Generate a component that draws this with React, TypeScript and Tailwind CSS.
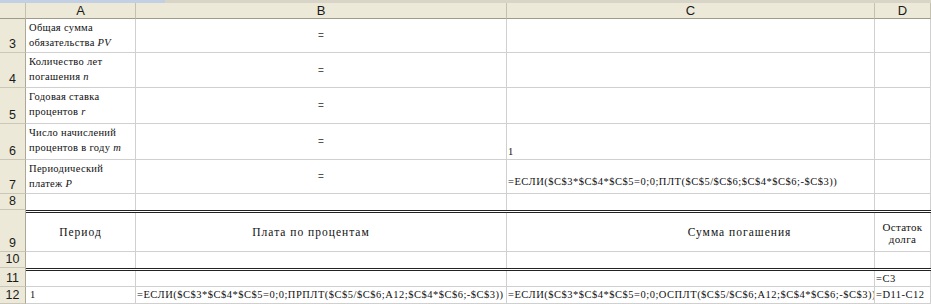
import React from "react";

const COLS = "grid grid-cols-[26px_110px_371px_368px_56px]";
const serif = "[font-family:'Liberation_Serif','Times_New_Roman',serif]";
const sans = "[font-family:'Liberation_Sans',Arial,sans-serif]";

function RowHead({ n }: { n: number }) {
  return (
    <div
      className={`${sans} flex items-end justify-center bg-[#ECE9D8] border-r border-b border-r-[#ACA899] border-b-[#CBC7B8] text-[12.5px] leading-[12px] pb-[2px] text-[#1a1a1a]`}
    >
      {n}
    </div>
  );
}

function Cell({ className = "", children }: { className?: string; children?: React.ReactNode }) {
  return <div className={`border-r border-b border-[#D0D0D0] bg-white overflow-hidden ${className}`}>{children}</div>;
}

const labelCls = `${serif} text-[10.5px] leading-[15px] tracking-[0.3px] text-[#111] pl-[3px] pt-[1px]`;
const eqCls = `${sans} flex items-center justify-center text-[10px] text-[#555]`;
const formulaCls = `${serif} text-[10.5px] leading-[14px] tracking-[0.5px] text-[#111] whitespace-nowrap pl-[1px]`;
const headCls = `${serif} flex items-center justify-center text-[11.5px] tracking-[1px] text-[#111] pt-[2px]`;

const inputs: { n: number; h: string; label: React.ReactNode; c?: React.ReactNode; cAlign?: string }[] = [
  { n: 3, h: "h-[34px]", label: <>Общая сумма<br />обязательства <i>PV</i></> },
  { n: 4, h: "h-[35px]", label: <>Количество лет<br />погашения <i>n</i></> },
  { n: 5, h: "h-[36px]", label: <>Годовая ставка<br />процентов <i>r</i></> },
  { n: 6, h: "h-[36px]", label: <>Число начислений<br />процентов в году <i>m</i></>, c: "1", cAlign: "leading-[10px]" },
  {
    n: 7,
    h: "h-[34px]",
    label: <>Периодический<br />платеж <i>P</i></>,
    c: "=ЕСЛИ($C$3*$C$4*$C$5=0;0;ПЛТ($C$5/$C$6;$C$4*$C$6;-$C$3))",
    cAlign: "pb-[4px]",
  },
];

function DoubleRule() {
  return (
    <div className="grid grid-cols-[26px_1fr] h-[3px]">
      <div className="bg-[#ECE9D8] border-r border-[#ACA899]" />
      <div className="border-y border-[#222] bg-white" />
    </div>
  );
}

export default function App() {
  return (
    <div className="w-[931px] h-[304px] overflow-hidden bg-white">
      {/* sheet tab strip */}
      <div className="flex h-[3px]">
        <div className="w-[165px] bg-[#C3D0E4]" />
        <div className="flex-1 bg-[#D8D5C8]" />
      </div>

      {/* column letters */}
      <div className={`${COLS} h-[16px]`}>
        {["", "A", "B", "C", "D"].map((l, i) => (
          <div
            key={i}
            className={`${sans} flex items-center justify-center bg-[#ECE9D8] border-r border-b border-r-[#C5C1B0] border-b-[#9E9B8A] text-[13px] leading-none text-[#1a1a1a]`}
          >
            {l}
          </div>
        ))}
      </div>

      {/* input block */}
      {inputs.map((r) => (
        <div key={r.n} className={`${COLS} ${r.h}`}>
          <RowHead n={r.n} />
          <Cell className={labelCls}>{r.label}</Cell>
          <Cell className={eqCls}>=</Cell>
          <Cell className={`${formulaCls} flex items-end ${r.cAlign ?? ""}`}>{r.c}</Cell>
          <Cell />
        </div>
      ))}

      <div className={`${COLS} h-[16px]`}>
        <RowHead n={8} />
        <Cell className="border-b-0" />
        <Cell className="border-b-0" />
        <Cell className="border-b-0" />
        <Cell className="border-b-0" />
      </div>
      <DoubleRule />

      {/* table header */}
      <div className={`${COLS} h-[39px]`}>
        <RowHead n={9} />
        <Cell className={headCls}>Период</Cell>
        <Cell className={`${headCls} pr-[20px]`}>Плата по процентам</Cell>
        <Cell className={`${headCls} pl-[98px]`}>Сумма погашения</Cell>
        <Cell className={`${serif} flex items-center justify-center text-[11px] leading-[12px] tracking-[0.3px] text-[#111] pt-[2px]`}>
          <div className="text-center">
            Остаток
            <br />
            долга
          </div>
        </Cell>
      </div>
      <div className={`${COLS} h-[16px]`}>
        <RowHead n={10} />
        <Cell className="border-b-0" />
        <Cell className="border-b-0" />
        <Cell className="border-b-0" />
        <Cell className="border-b-0" />
      </div>
      <DoubleRule />

      <div className={`${COLS} h-[16px]`}>
        <RowHead n={11} />
        <Cell />
        <Cell />
        <Cell />
        <Cell className={`${formulaCls} flex items-end`}>=C3</Cell>
      </div>
      <div className={`${COLS} h-[17px]`}>
        <RowHead n={12} />
        <Cell className={`${formulaCls} flex items-center pl-[4px]`}>1</Cell>
        <Cell className={`${formulaCls} flex items-center`}>=ЕСЛИ($C$3*$C$4*$C$5=0;0;ПРПЛТ($C$5/$C$6;A12;$C$4*$C$6;-$C$3))</Cell>
        <Cell className={`${formulaCls} flex items-center`}>=ЕСЛИ($C$3*$C$4*$C$5=0;0;ОСПЛТ($C$5/$C$6;A12;$C$4*$C$6;-$C$3))</Cell>
        <Cell className={`${formulaCls} flex items-center`}>=D11-C12</Cell>
      </div>
    </div>
  );
}
